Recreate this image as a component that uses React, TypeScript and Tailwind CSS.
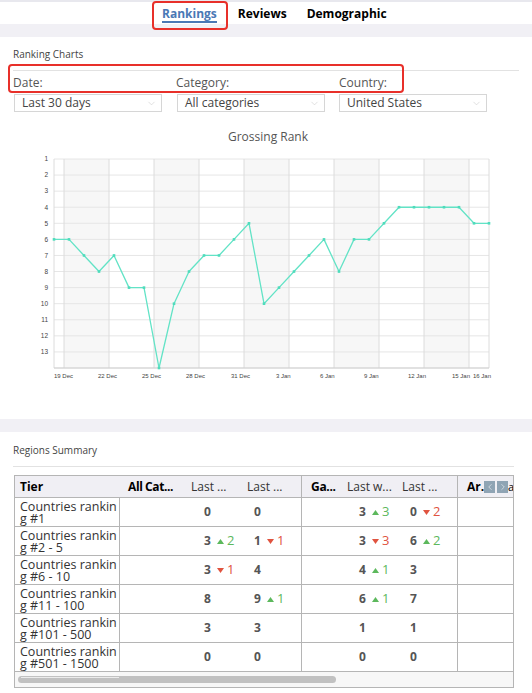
import React from 'react';
import { ChevronDown, ChevronLeft, ChevronRight } from 'lucide-react';

const ranks = [6, 6, 7, 8, 7, 9, 9, 14, 10, 8, 7, 7, 6, 5, 10, 9, 8, 7, 6, 8, 6, 6, 5, 4, 4, 4, 4, 4, 5, 5];
const px = (i: number) => 54 + i * 15;
const py = (r: number) => 13 + ((r - 1) * 209) / 13;

const bands = [64, 154, 244, 334, 424];
const vLines = [64, 109, 154, 199, 244, 289, 334, 379, 424, 469];
const xLabels: [string, number][] = [
  ['19 Dec', 54], ['22 Dec', 98], ['25 Dec', 142], ['28 Dec', 186], ['31 Dec', 231],
  ['3 Jan', 276], ['6 Jan', 320], ['9 Jan', 364], ['12 Jan', 408], ['15 Jan', 452], ['16 Jan', 473],
];

type Delta = { up: boolean; n: number } | null;
type Cell = { v: string; d: Delta } | null;

const rows: { tier: string; a: Cell; b: Cell; c: Cell; e: Cell }[] = [
  { tier: 'Countries ranking #1', a: { v: '0', d: null }, b: { v: '0', d: null }, c: { v: '3', d: { up: true, n: 3 } }, e: { v: '0', d: { up: false, n: 2 } } },
  { tier: 'Countries ranking #2 - 5', a: { v: '3', d: { up: true, n: 2 } }, b: { v: '1', d: { up: false, n: 1 } }, c: { v: '3', d: { up: false, n: 3 } }, e: { v: '6', d: { up: true, n: 2 } } },
  { tier: 'Countries ranking #6 - 10', a: { v: '3', d: { up: false, n: 1 } }, b: { v: '4', d: null }, c: { v: '4', d: { up: true, n: 1 } }, e: { v: '3', d: null } },
  { tier: 'Countries ranking #11 - 100', a: { v: '8', d: null }, b: { v: '9', d: { up: true, n: 1 } }, c: { v: '6', d: { up: true, n: 1 } }, e: { v: '7', d: null } },
  { tier: 'Countries ranking #101 - 500', a: { v: '3', d: null }, b: { v: '3', d: null }, c: { v: '1', d: null }, e: { v: '1', d: null } },
  { tier: 'Countries ranking #501 - 1500', a: { v: '0', d: null }, b: { v: '0', d: null }, c: { v: '0', d: null }, e: { v: '0', d: null } },
];

const Value: React.FC<{ cell: Cell }> = ({ cell }) => {
  if (!cell) return null;
  return (
    <span className="flex items-center">
      <span className="font-bold text-[#555]">{cell.v}</span>
      {cell.d && (
        <span className={`flex items-center ml-[6px] ${cell.d.up ? 'text-[#5cb85c]' : 'text-[#e0533f]'}`}>
          <svg width={7} height={5} className="mr-[3px]" viewBox="0 0 7 5">
            {cell.d.up ? <polygon points="0,5 7,5 3.5,0" fill="currentColor" /> : <polygon points="0,0 7,0 3.5,5" fill="currentColor" />}
          </svg>
          <span className="text-[13px]">{cell.d.n}</span>
        </span>
      )}
    </span>
  );
};

const Select: React.FC<{ label: string }> = ({ label }) => (
  <div className="w-[148px] h-[18px] border border-[#d6d6d6] flex items-center justify-between pl-[7px] pr-[4px] text-[12px] text-[#444]">
    <span className="leading-none">{label}</span>
    <ChevronDown className="w-[11px] h-[11px] text-[#c4c4c4]" strokeWidth={1.1} />
  </div>
);

const GrossingChart: React.FC = () => (
  <svg width={532} height={273} className="block">
    {bands.map((x) => (
      <rect key={x} x={x} y={13} width={45} height={209} fill="#f7f7f7" />
    ))}
    {Array.from({ length: 14 }, (_, k) => (
      <line key={k} x1={54} x2={489} y1={py(k + 1)} y2={py(k + 1)} stroke="#e6e6e6" strokeWidth={1} />
    ))}
    {vLines.map((x) => (
      <line key={x} x1={x} x2={x} y1={13} y2={222} stroke="#dcdcdc" strokeWidth={1} />
    ))}
    <line x1={54} x2={54} y1={13} y2={222} stroke="#dcdcdc" />
    <line x1={489} x2={489} y1={13} y2={222} stroke="#dcdcdc" />
    <line x1={54} x2={489} y1={222} y2={222} stroke="#cfcfcf" />
    {Array.from({ length: 13 }, (_, k) => (
      <text key={k} x={48} y={py(k + 1) + 2.3} fontSize={6.5} textAnchor="end" fill="#444" fontFamily="'Liberation Sans', Arial, sans-serif">
        {k + 1}
      </text>
    ))}
    {xLabels.map(([t, x]) => (
      <text key={t} x={x} y={232} fontSize={6} fill="#444" fontFamily="'Liberation Sans', Arial, sans-serif">
        {t}
      </text>
    ))}
    <polyline
      points={ranks.map((r, i) => `${px(i)},${py(r)}`).join(' ')}
      fill="none"
      stroke="#62e3c6"
      strokeWidth={1.3}
      strokeLinejoin="round"
    />
    {ranks.map((r, i) => (
      <rect key={i} x={px(i) - 1.3} y={py(r) - 1.3} width={2.6} height={2.6} fill="#4fdcbc" />
    ))}
  </svg>
);

const App: React.FC = () => {
  return (
    <div className="relative w-[532px] h-[693px] overflow-hidden bg-white font-['Open_Sans',sans-serif] text-[#333]">
      {/* tabs */}
      <div className="h-[2px] bg-[#e8e8ee]" />
      <div className="h-[22px] flex pl-[162px] text-[12px] font-bold leading-[16px]">
        <div className="pt-[4px] text-[#4a78b5] border-b-2 border-[#4a78b5] h-[21px]">Rankings</div>
        <div className="pt-[4px] ml-[21px] text-black">Reviews</div>
        <div className="pt-[4px] ml-[20px] text-black">Demographic</div>
      </div>
      <div className="h-[13px] bg-[#f1f0f5]" />

      {/* ranking charts */}
      <div className="h-[382px] pt-[10px]">
        <div className="mx-[13px] text-[10px] leading-[15px] text-[#444] pb-[8px] border-b border-[#e2e2e2]">Ranking Charts</div>
        <div className="flex pl-[13px] mt-[3px] text-[12px] leading-[18px] text-[#555]">
          <div className="w-[163px]">Date:</div>
          <div className="w-[163px]">Category:</div>
          <div className="w-[163px]">Country:</div>
        </div>
        <div className="flex pl-[14px] mt-[2px] gap-[14px]">
          <Select label="Last 30 days" />
          <div className="ml-[1px]"><Select label="All categories" /></div>
          <Select label="United States" />
        </div>
        <div className="mt-[16px] text-center text-[12px] leading-[18px] text-[#555] pl-[4px]">Grossing Rank</div>
        <GrossingChart />
      </div>
      <div className="h-[13px] bg-[#f1f0f5]" />

      {/* regions summary */}
      <div className="pt-[11px]">
        <div className="mx-[13px] w-[501px] text-[10px] leading-[15px] text-[#444] pb-[8px] border-b border-[#e2e2e2]">Regions Summary</div>
        <div className="ml-[14px] mt-[8px] w-[500px] border border-[#b5b5b5] text-[12px]">
          <div className="h-[22px] flex bg-[#f0eff4] border-b border-[#b5b5b5] items-center">
            <div className="w-[105px] pl-[5px] font-bold text-black">Tier</div>
            <div className="w-[64px] pl-[8px] font-bold text-black whitespace-nowrap tracking-[-0.4px]">All Cat...</div>
            <div className="w-[52px] pl-[7px] whitespace-nowrap">Last ...</div>
            <div className="w-[66px] pl-[11px] h-full flex items-center border-r border-[#b5b5b5] whitespace-nowrap">Last ...</div>
            <div className="w-[41px] pl-[9px] font-bold text-black tracking-[-0.3px]">Ga...</div>
            <div className="w-[55px] pl-[4px] whitespace-nowrap">Last w...</div>
            <div className="w-[60px] pl-[4px] h-full flex items-center border-r border-[#b5b5b5] whitespace-nowrap">Last ...</div>
            <div className="flex-1 relative h-full flex items-center pl-[9px] font-bold text-black overflow-hidden">
              Ar.
              <span className="absolute left-[26px] top-[5px] w-[11px] h-[12px] bg-[#8fa4b4] flex items-center justify-center">
                <ChevronLeft className="w-[10px] h-[10px] text-white" strokeWidth={1.3} />
              </span>
              <span className="absolute left-[39px] top-[5px] w-[11px] h-[12px] bg-[#8fa4b4] flex items-center justify-center">
                <ChevronRight className="w-[10px] h-[10px] text-white" strokeWidth={1.3} />
              </span>
              <span className="absolute left-[50px] top-[3px] font-normal text-[11px]">a</span>
            </div>
          </div>
          {rows.map((r) => (
            <div key={r.tier} className="h-[29px] flex border-b border-[#b5b5b5]">
              <div className="w-[105px] pl-[5px] pr-[2px] pt-[3px] border-r border-[#b5b5b5] leading-[12px] text-[12.5px] break-all text-[#333]">{r.tier}</div>
              <div className="w-[64px]" />
              <div className="w-[52px] pl-[20px] flex items-center"><Value cell={r.a} /></div>
              <div className="w-[66px] pl-[18px] flex items-center border-r border-[#b5b5b5]"><Value cell={r.b} /></div>
              <div className="w-[41px]" />
              <div className="w-[55px] pl-[16px] flex items-center"><Value cell={r.c} /></div>
              <div className="w-[60px] pl-[12px] flex items-center border-r border-[#b5b5b5]"><Value cell={r.e} /></div>
              <div className="flex-1" />
            </div>
          ))}
          <div className="h-[15px] bg-[#f7f7f7] pt-[4px] pl-[3px]">
            <div className="relative w-[318px] h-[7px] rounded-full bg-[#c1c1c1]">
              <div className="absolute left-[3px] top-[1px] w-[98px] h-[1px] bg-[#ececec]" />
            </div>
          </div>
        </div>
      </div>

      {/* annotation boxes */}
      <div className="absolute left-[152px] top-[1px] w-[76px] h-[29px] border-2 border-[#e8302a] rounded-[4px]" />
      <div className="absolute left-[8px] top-[64px] w-[396px] h-[29px] border-2 border-[#e8302a] rounded-[4px]" />
    </div>
  );
};

export default App;
